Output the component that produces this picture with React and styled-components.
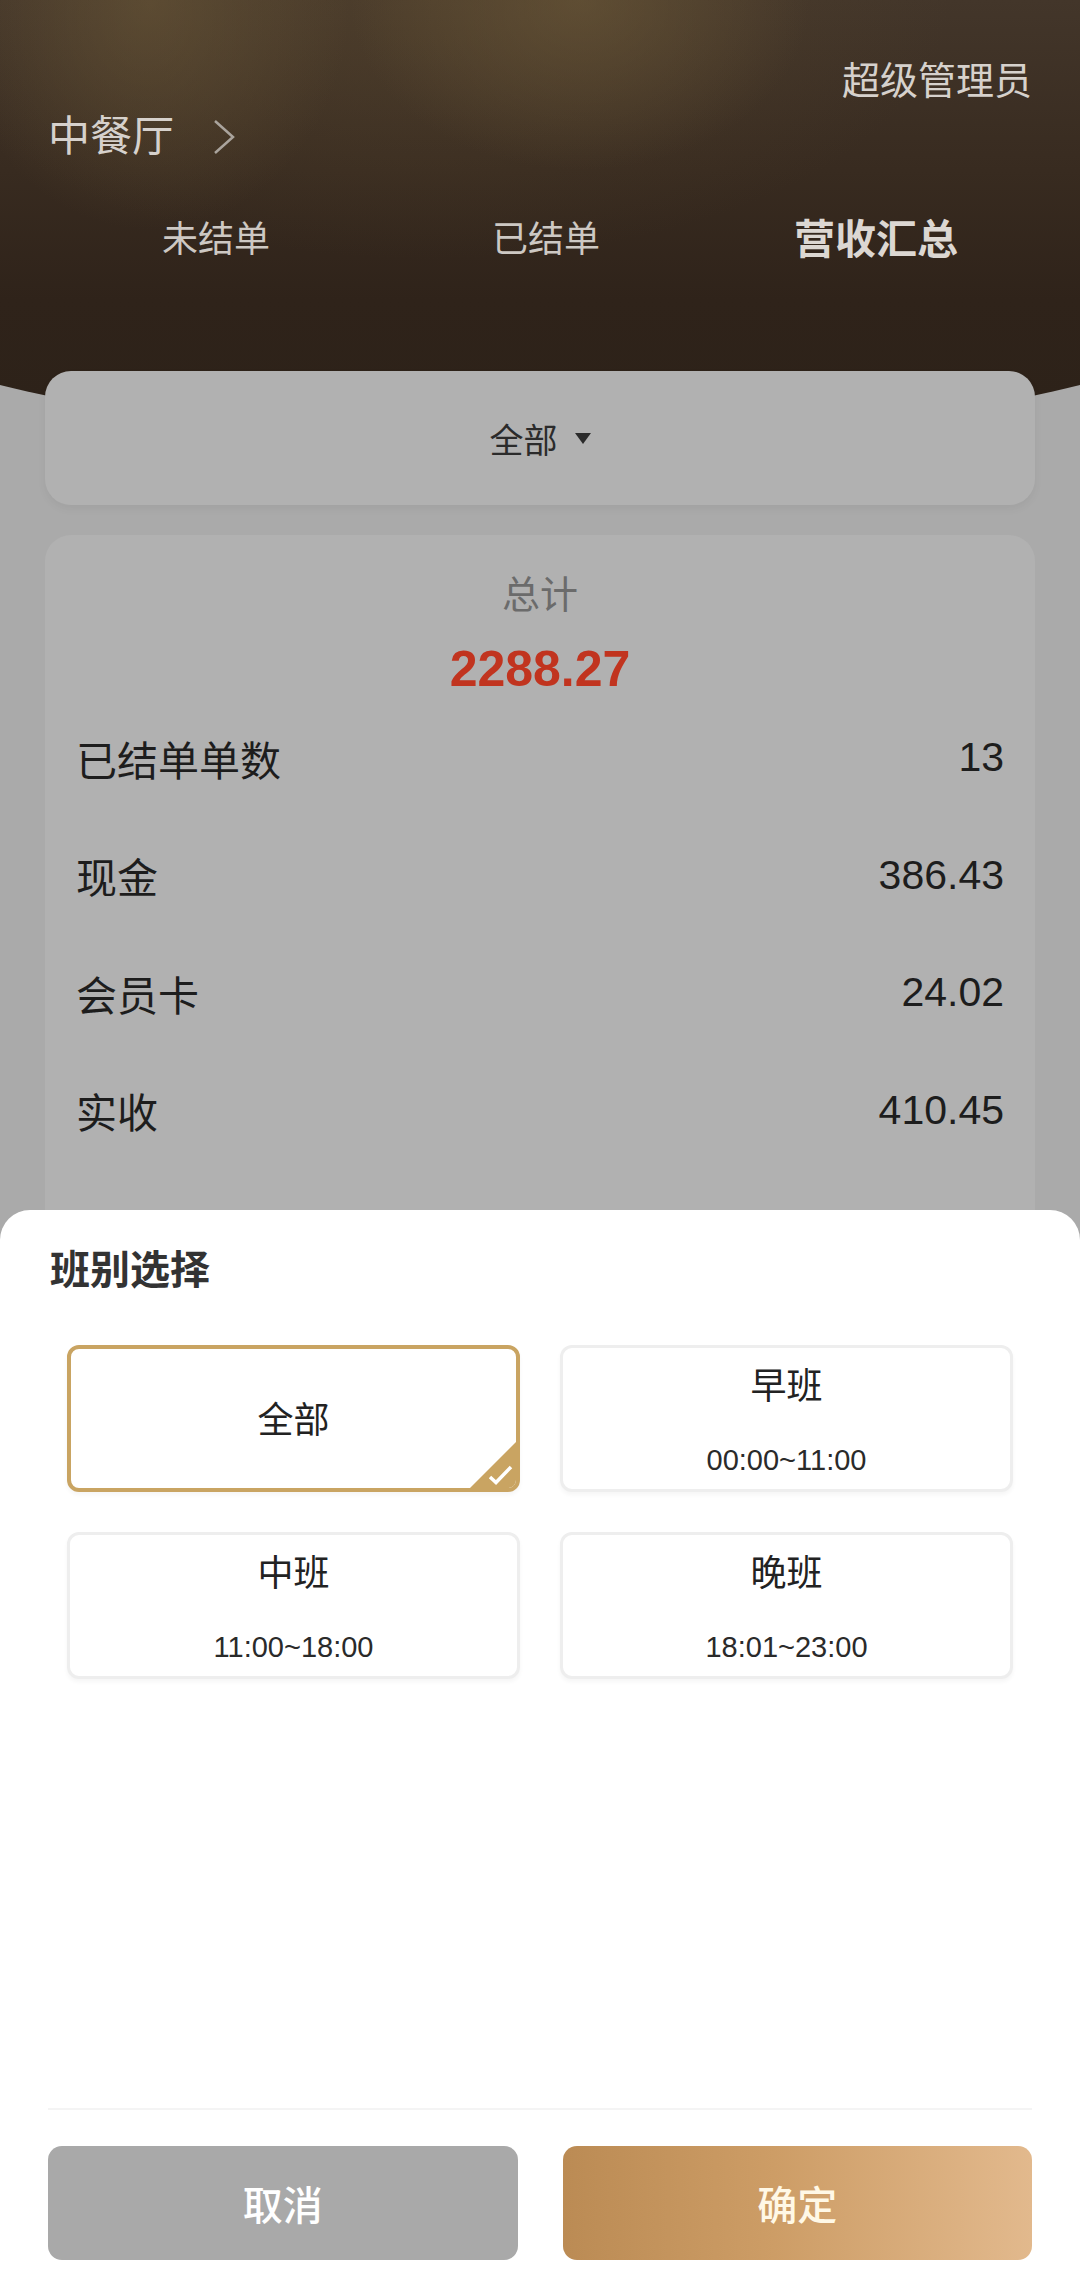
import React from 'react';
import styled, { createGlobalStyle } from 'styled-components';

const GlobalStyle = createGlobalStyle`
  * { box-sizing: border-box; }
  html, body { margin: 0; padding: 0; }
  body {
    background: #aaaaaa;
    font-family: "Liberation Sans", "Noto Sans CJK SC", sans-serif;
  }
`;

const Page = styled.div`
  position: relative;
  min-height: 2290px;
  background: #aaaaaa;
  overflow: hidden;
`;

const Header = styled.header`
  position: relative;
  height: 371px;
  padding: 58px 48px 0;
  color: #d6d1cc;

  &::before {
    content: '';
    position: absolute;
    top: 0;
    left: -270px;
    width: 1620px;
    height: 442px;
    border-radius: 0 0 810px 810px / 0 0 224px 224px;
    background:
      radial-gradient(ellipse 200px 230px at 420px 0, rgba(112, 92, 58, 0.5), transparent),
      radial-gradient(ellipse 230px 170px at 850px 0, rgba(112, 92, 58, 0.55), transparent),
      radial-gradient(ellipse 520px 260px at 700px 0, rgba(90, 72, 46, 0.45), transparent),
      linear-gradient(180deg, #43362a 0, #382b20 170px, #2f231a 300px, #2d2219 400px);
  }

  & > * {
    position: relative;
  }
`;

const RoleRow = styled.div`
  text-align: right;
  font-size: 38px;
  line-height: 46px;
`;

const StoreRow = styled.div`
  display: flex;
  align-items: center;
  gap: 38px;
  margin-top: 8px;
  font-size: 42px;
  line-height: 50px;
`;

const Tabs = styled.nav`
  display: grid;
  grid-template-columns: repeat(3, 1fr);
  margin: 50px -9px 0 3px;
  line-height: 56px;
`;

const Tab = styled.div`
  text-align: center;
  font-size: ${(p) => (p.$active ? 41 : 36)}px;
  font-weight: ${(p) => (p.$active ? 700 : 400)};
  color: ${(p) => (p.$active ? '#dcd7d2' : '#cdc8c3')};
`;

const Content = styled.main`
  position: relative;
  display: flex;
  flex-direction: column;
  gap: 30px;
  padding: 0 45px;
`;

const FilterCard = styled.div`
  display: flex;
  align-items: center;
  justify-content: center;
  height: 134px;
  border-radius: 26px;
  background: #b1b1b1;
  box-shadow: 0 4px 8px rgba(0, 0, 0, 0.05);
  font-size: 34px;
  color: #2b2b2b;
`;

const Caret = styled.span`
  margin-left: 17px;
  border-left: 8px solid transparent;
  border-right: 8px solid transparent;
  border-top: 11px solid #2b2b2b;
`;

const StatsCard = styled.section`
  padding: 35px 0 40px;
  border-radius: 26px 26px 0 0;
  background: #b1b1b1;
  min-height: 900px;
`;

const TotalLabel = styled.div`
  text-align: center;
  font-size: 38px;
  line-height: 50px;
  color: #6b6b6b;
`;

const TotalValue = styled.div`
  margin-top: 19px;
  text-align: center;
  font-size: 50px;
  font-weight: 700;
  line-height: 60px;
  color: #c1341f;
`;

const StatRow = styled.div`
  display: flex;
  align-items: center;
  justify-content: space-between;
  height: 117.5px;
  padding: 0 31px;
  font-size: 41px;
  color: #1d1d1d;
`;

const Sheet = styled.div`
  position: fixed;
  left: 0;
  right: 0;
  bottom: 0;
  height: 1080px;
  display: flex;
  flex-direction: column;
  background: #ffffff;
  border-radius: 30px 30px 0 0;
`;

const SheetTitle = styled.h2`
  margin: 0;
  padding: 32px 50px 0;
  font-size: 40px;
  font-weight: 700;
  line-height: 56px;
  color: #333333;
`;

const OptionGrid = styled.div`
  display: grid;
  grid-template-columns: 1fr 1fr;
  gap: 40px;
  margin-top: 47px;
  padding: 0 67px;
`;

const Option = styled.div`
  position: relative;
  overflow: hidden;
  display: flex;
  flex-direction: column;
  align-items: center;
  justify-content: center;
  height: 147px;
  padding-top: 4px;
  border-radius: 12px;
  border: ${(p) => (p.$selected ? '4px solid #c9a462' : '3px solid #eeeeee')};
  background: #ffffff;
  box-shadow: 0 3px 4px rgba(0, 0, 0, 0.04);
`;

const OptionName = styled.div`
  font-size: 36px;
  line-height: 48px;
  color: #222222;
`;

const OptionTime = styled.div`
  margin-top: 31px;
  font-size: 29px;
  line-height: 36px;
  color: #2a2a2a;
`;

const CornerMark = styled.svg`
  position: absolute;
  right: -4px;
  bottom: -4px;
`;

const Divider = styled.div`
  height: 2px;
  margin: auto 48px 0;
  background: #f4f4f4;
`;

const Footer = styled.div`
  display: flex;
  gap: 45px;
  padding: 36px 48px 30px;
`;

const Button = styled.button`
  flex: 1;
  height: 114px;
  border: none;
  border-radius: 14px;
  font-family: inherit;
  font-size: 40px;
  font-weight: 500;
  color: ${(p) => (p.$primary ? '#fff8e6' : '#ffffff')};
  background: ${(p) =>
    p.$primary ? 'linear-gradient(90deg, #bb8b54 0%, #cd9d66 45%, #e2b98d 100%)' : '#a9a9a9'};
`;

const stats = [
  ['已结单单数', '13'],
  ['现金', '386.43'],
  ['会员卡', '24.02'],
  ['实收', '410.45'],
  ['未结单单数', '0'],
];

const shifts = [
  { name: '全部' },
  { name: '早班', time: '00:00~11:00' },
  { name: '中班', time: '11:00~18:00' },
  { name: '晚班', time: '18:01~23:00' },
];

export default function App() {
  const selected = '全部';

  return (
    <Page>
      <GlobalStyle />
      <Header>
        <RoleRow>超级管理员</RoleRow>
        <StoreRow>
          中餐厅
          <svg width="24" height="36" viewBox="0 0 24 36">
            <path d="M3 2 L21 18 L3 34" fill="none" stroke="#aaa49d" strokeWidth="2.5" />
          </svg>
        </StoreRow>
        <Tabs>
          <Tab>未结单</Tab>
          <Tab>已结单</Tab>
          <Tab $active>营收汇总</Tab>
        </Tabs>
      </Header>

      <Content>
        <FilterCard>
          全部
          <Caret />
        </FilterCard>
        <StatsCard>
          <TotalLabel>总计</TotalLabel>
          <TotalValue>2288.27</TotalValue>
          {stats.map(([label, value]) => (
            <StatRow key={label}>
              <span>{label}</span>
              <span>{value}</span>
            </StatRow>
          ))}
        </StatsCard>
      </Content>

      <Sheet>
        <SheetTitle>班别选择</SheetTitle>
        <OptionGrid>
          {shifts.map((s) => (
            <Option key={s.name} $selected={s.name === selected}>
              <OptionName>{s.name}</OptionName>
              {s.time && <OptionTime>{s.time}</OptionTime>}
              {s.name === selected && (
                <CornerMark width="54" height="54" viewBox="0 0 54 54">
                  <polygon points="54,0 54,54 0,54" fill="#c9a462" />
                  <path d="M24 39 L30 44.5 L45 29" fill="none" stroke="#ffffff" strokeWidth="3.5" />
                </CornerMark>
              )}
            </Option>
          ))}
        </OptionGrid>
        <Divider />
        <Footer>
          <Button>取消</Button>
          <Button $primary>确定</Button>
        </Footer>
      </Sheet>
    </Page>
  );
}
